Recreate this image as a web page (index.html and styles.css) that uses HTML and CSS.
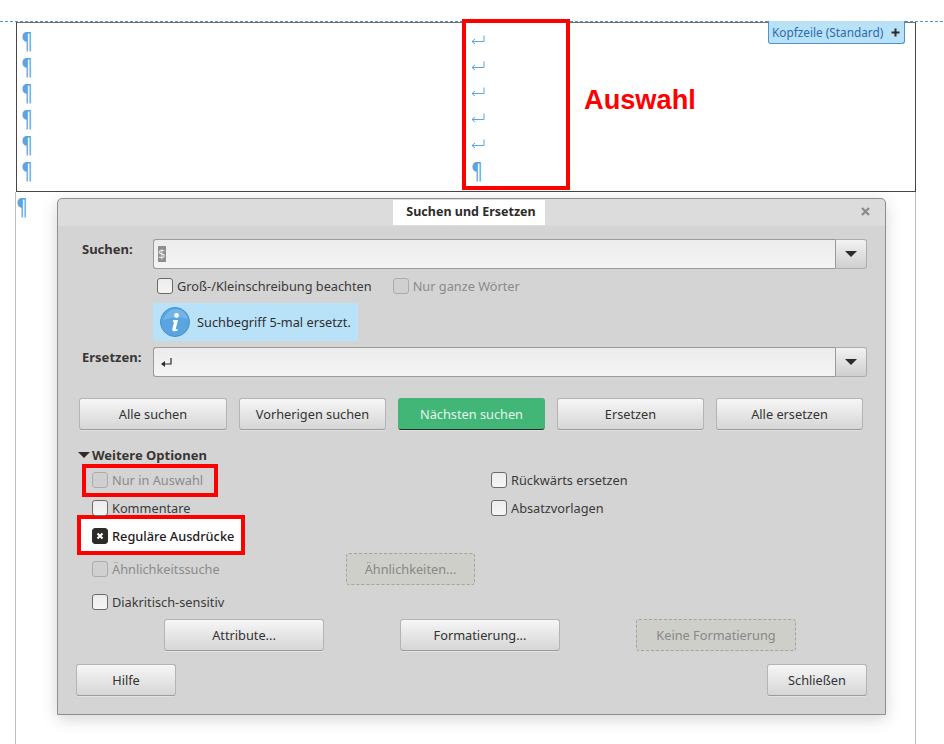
FILE: index.html
```html
<!DOCTYPE html>
<html lang="de">
<head>
<meta charset="utf-8">
<title>Suchen und Ersetzen</title>
<link rel="stylesheet" href="styles.css">
</head>
<body>
<div class="page">
  <div class="header-area">
    <div class="line"><span class="pil">¶</span><svg class="ret" viewBox="0 0 14 10"><path d="M13 0.5V6.5H1M1 6.5L4 4M1 6.5L4 9" fill="none" stroke="#5aa5e0" stroke-width="1"/></svg></div>
    <div class="line"><span class="pil">¶</span><svg class="ret" viewBox="0 0 14 10"><path d="M13 0.5V6.5H1M1 6.5L4 4M1 6.5L4 9" fill="none" stroke="#5aa5e0" stroke-width="1"/></svg></div>
    <div class="line"><span class="pil">¶</span><svg class="ret" viewBox="0 0 14 10"><path d="M13 0.5V6.5H1M1 6.5L4 4M1 6.5L4 9" fill="none" stroke="#5aa5e0" stroke-width="1"/></svg></div>
    <div class="line"><span class="pil">¶</span><svg class="ret" viewBox="0 0 14 10"><path d="M13 0.5V6.5H1M1 6.5L4 4M1 6.5L4 9" fill="none" stroke="#5aa5e0" stroke-width="1"/></svg></div>
    <div class="line"><span class="pil">¶</span><svg class="ret" viewBox="0 0 14 10"><path d="M13 0.5V6.5H1M1 6.5L4 4M1 6.5L4 9" fill="none" stroke="#5aa5e0" stroke-width="1"/></svg></div>
    <div class="line"><span class="pil">¶</span><span class="pil pil-end">¶</span></div>
    <div class="tag"><span>Kopfzeile (Standard)</span><svg class="tag-plus" viewBox="0 0 9 9"><path d="M4.5 0.5V8.5M0.5 4.5H8.5" stroke="#2b2b2b" stroke-width="2"/></svg></div>
  </div>
  <div class="body-area"><span class="pil">¶</span></div>
  <div class="sel-box"></div>
  <div class="sel-label">Auswahl</div>

  <div class="dialog">
    <div class="titlebar">
      <span class="title">Suchen und Ersetzen</span>
      <svg class="close" viewBox="0 0 9 9"><path d="M1 1L8 8M8 1L1 8" stroke="#8a8a8a" stroke-width="2.2"/></svg>
    </div>
    <div class="content">
      <div class="field">
        <label class="field-label">Suchen:</label>
        <div class="combo">
          <div class="entry"><span class="selected">$</span></div>
          <div class="drop"><i class="tri"></i></div>
        </div>
      </div>
      <div class="under-field checks">
        <label class="chk"><i class="box"></i>Groß-/Kleinschreibung beachten</label>
        <label class="chk off"><i class="box"></i>Nur ganze Wörter</label>
      </div>
      <div class="under-field">
        <div class="info">
          <svg class="info-icon" viewBox="0 0 30 30"><circle cx="15" cy="15" r="14.5" fill="#5aa5e0" stroke="#4a8fc8"/><path d="M3 13C6 5 12 2 17 2C23 3 27 7 28 12C20 9 11 10 3 13Z" fill="#74b5e8"/><circle cx="16.5" cy="8.5" r="2.4" fill="#fff"/><path d="M13 13H18L15.8 21.5C15.6 22.5 16.4 22.6 17.8 22L17.5 23.6C15 24.8 11.8 24.8 12.3 22L14 15.2L12.8 14.6Z" fill="#fff"/></svg>
          <span>Suchbegriff 5-mal ersetzt.</span>
        </div>
      </div>
      <div class="field field-second">
        <label class="field-label">Ersetzen:</label>
        <div class="combo">
          <div class="entry"><svg class="entry-ret" viewBox="0 0 11 9"><path d="M10 0V6H3" fill="none" stroke="#2b2b2b" stroke-width="1.2"/><path d="M0 6L4 3V9Z" fill="#2b2b2b"/></svg></div>
          <div class="drop"><i class="tri"></i></div>
        </div>
      </div>
      <div class="actions">
        <button class="btn">Alle suchen</button>
        <button class="btn">Vorherigen suchen</button>
        <button class="btn primary">Nächsten suchen</button>
        <button class="btn">Ersetzen</button>
        <button class="btn">Alle ersetzen</button>
      </div>
      <div class="expander"><i class="tri"></i>Weitere Optionen</div>
      <div class="options">
        <div class="opt-a span2 mark-outline"><label class="chk off"><i class="box"></i>Nur in Auswahl</label></div>
        <div class="opt-c"><label class="chk"><i class="box"></i>Rückwärts ersetzen</label></div>
        <div class="opt-a span2"><label class="chk"><i class="box"></i>Kommentare</label></div>
        <div class="opt-c"><label class="chk"><i class="box"></i>Absatzvorlagen</label></div>
        <div class="opt-a span3 mark-fill"><label class="chk strong"><i class="box checked"><svg viewBox="0 0 8 8"><path d="M1.5 1.5L6.5 6.5M6.5 1.5L1.5 6.5" stroke="#fff" stroke-width="2"/></svg></i>Reguläre Ausdrücke</label></div>
        <div class="opt-a"><label class="chk off"><i class="box"></i>Ähnlichkeitssuche</label></div>
        <div class="opt-b span2"><button class="btn disabled sim">Ähnlichkeiten...</button></div>
        <div class="opt-a span3"><label class="chk"><i class="box"></i>Diakritisch-sensitiv</label></div>
      </div>
      <div class="format-row">
        <button class="btn wide">Attribute...</button>
        <button class="btn wide">Formatierung...</button>
        <button class="btn wide disabled">Keine Formatierung</button>
      </div>
      <div class="footer-row">
        <button class="btn foot">Hilfe</button>
        <button class="btn foot">Schließen</button>
      </div>
    </div>
  </div>
</div>
</body>
</html>
```

FILE: styles.css
```css
*, *::before, *::after { box-sizing: border-box; }
html, body { margin: 0; padding: 0; background: #fff; }
body { font-family: "Noto Sans", "Open Sans", sans-serif; font-size: 12.75px; color: #333; }
i { font-style: normal; display: block; }

.page {
  position: relative;
  width: 944px;
  height: 744px;
  overflow: hidden;
  padding-top: 21px;
  background-image: repeating-linear-gradient(90deg, #4f93cc 0 3px, #fff 3px 5px);
  background-size: 100% 1px;
  background-position: 0 21px;
  background-repeat: no-repeat;
}

.header-area {
  position: relative;
  margin: 1px 0 0 16px;
  width: 900px;
  height: 170px;
  background: #fff;
  border: 1px solid #4a4442;
  border-top-color: #77706e;
  padding-top: 5px;
  padding-left: 4px;
}
.line { display: flex; align-items: center; height: 26px; position: relative; }
.pil {
  font-family: "DejaVu Sans", sans-serif;
  font-size: 23px;
  line-height: 26px;
  color: #5aa5e0;
  width: 11px;
  display: block;
  transform: scaleX(0.8);
  transform-origin: left center;
}
.ret { width: 14px; height: 10px; margin-left: 439px; margin-top: -3px; }
.pil-end { margin-left: 439px; }

.tag {
  position: absolute;
  right: 10px;
  top: -2px;
  width: 137px;
  height: 23px;
  background: #b9e2f9;
  border: 1px solid #4f93cc;
  border-top: 0;
  border-radius: 0 0 3px 3px;
  color: #2a6bad;
  font-size: 11.8px;
  display: flex;
  align-items: center;
  padding: 0 4px 0 3px;
  justify-content: space-between;
}
.tag-plus { width: 9px; height: 9px; }

.body-area {
  margin-left: 15px;
  width: 901px;
  height: 560px;
  border-left: 1px solid #bdbdbd;
  border-right: 1px solid #bdbdbd;
  padding-top: 2px;
}

.sel-box {
  position: absolute;
  left: 462px;
  top: 19px;
  width: 108px;
  height: 171px;
  border: 4px solid #f00;
}
.sel-label {
  position: absolute;
  left: 584px;
  top: 84px;
  font-family: "Liberation Sans", sans-serif;
  font-weight: bold;
  font-size: 27.2px;
  line-height: 32px;
  color: #f00;
}

.dialog {
  position: absolute;
  left: 57px;
  top: 198px;
  width: 829px;
  height: 517px;
  background: #d4d4d4;
  border: 1px solid #8f8f8f;
  border-radius: 5px 5px 0 0;
  box-shadow: 0 4px 16px rgba(0, 0, 0, 0.17);
}
.titlebar {
  position: relative;
  height: 27px;
  display: flex;
  justify-content: center;
  padding: 1px 5px 0 0;
  background: #dcdcdc;
  border-radius: 5px 5px 0 0;
}
.title {
  width: 152px;
  height: 25px;
  background: #fff;
  font-weight: 700;
  font-size: 12.5px;
  color: #2e2a2a;
  text-align: center;
  text-indent: 4px;
  line-height: 24px;
}
.close { position: absolute; right: 15px; top: 8px; width: 9px; height: 9px; }

.content { padding: 13px 18px 0 24px; }

.field { display: flex; }
.field-second { margin-top: 6px; }
.field-label { width: 71px; font-weight: 700; font-size: 13px; color: #3a3535; line-height: 20px; }
.combo { flex: 1; display: flex; height: 30px; }
.entry {
  flex: 1;
  border: 1px solid #9a9a9a;
  border-right: 0;
  border-radius: 3px 0 0 3px;
  background: linear-gradient(#ececec, #f4f4f4);
  padding-left: 4px;
  display: flex;
  align-items: center;
}
.selected { background: #8e8e8e; color: #e6e6e6; line-height: 16px; height: 16px; width: 8px; font-size: 13px; }
.entry-ret { width: 11px; height: 9px; margin-left: 3px; margin-top: 1px; }
.drop {
  width: 32px;
  border: 1px solid #adadad;
  border-left: 1px solid #9a9a9a;
  border-radius: 0 3px 3px 0;
  background: linear-gradient(#f2f2f2, #cfcfcf);
  display: flex;
  align-items: center;
  justify-content: center;
}
.tri { width: 0; height: 0; border-left: 6px solid transparent; border-right: 6px solid transparent; border-top: 6px solid #2e2a2a; }

.under-field { margin-left: 71px; }
.checks { display: flex; gap: 21px; margin-top: 7px; padding-left: 4px; height: 19px; align-items: center; }
.chk { display: flex; align-items: center; gap: 4px; color: #3a3a3a; white-space: nowrap; position: relative; z-index: 1; }
.box {
  width: 16px;
  height: 16px;
  border: 1px solid #6e6a6a;
  border-radius: 3px;
  background: linear-gradient(#ececec, #f5f5f5);
  flex: none;
  display: flex;
  align-items: center;
  justify-content: center;
}
.off { color: #8b8b8b; }
.off .box { border-color: #acacac; background: #d0d0d0; }
.strong { color: #1d1a1a; font-weight: 500; }
.checked { background: #2f2a2a; border-color: #2f2a2a; }
.checked svg { width: 8px; height: 8px; }

.info {
  width: 205px;
  height: 38px;
  margin-top: 8px;
  background: #b9e2f9;
  display: flex;
  align-items: center;
  gap: 7px;
  padding-left: 7px;
  color: #2f2f2f;
}
.info-icon { width: 30px; height: 30px; flex: none; }

.btn {
  font-family: inherit;
  font-size: 12.75px;
  color: #333;
  height: 32px;
  border: 1px solid #b4b4b4;
  border-bottom-color: #9c9c9c;
  border-radius: 3px;
  background: linear-gradient(#f6f6f6, #d6d6d6);
  padding: 0;
  box-shadow: 0 1px 0 rgba(255, 255, 255, 0.3);
}
.primary { background: #41b677; border-color: #41b677; border-bottom: 1px solid #2a2a2a; color: #e6f5ec; }
.disabled { background: #cfcfca; border: 1px dashed #a3a3a0; color: #888; box-shadow: none; }

.actions { display: flex; gap: 12px; margin: 21px 4px 0 -3px; }
.actions .btn { flex: 1; }
.actions .btn:first-child { flex: 0 0 148px; }

.expander {
  display: flex;
  align-items: center;
  gap: 2px;
  margin: 17px 0 0 -4px;
  height: 15px;
  font-size: 13px;
  font-weight: 700;
  color: #3a3535;
}

.options {
  display: grid;
  grid-template-columns: 254px 145px 1fr;
  grid-template-rows: 28px 28px 28px 38px 28px;
  margin: 4px 0 0 10px;
}
.opt-a, .opt-b, .opt-c { display: flex; align-items: center; position: relative; }
.span2 { grid-column: span 2; }
.span3 { grid-column: span 3; }
.sim { width: 129px; }

.mark-outline::after {
  content: "";
  position: absolute;
  left: -10px;
  top: -2px;
  width: 136px;
  height: 33px;
  border: 4px solid #f00;
}
.mark-fill::before {
  content: "";
  position: absolute;
  left: -15px;
  top: -7px;
  width: 168px;
  height: 40px;
  border: 4px solid #f00;
  background: #fff;
}

.format-row { display: flex; gap: 76px; margin: 3px 0 0 82px; }
.wide { width: 160px; }
.footer-row { display: flex; justify-content: space-between; margin: 13px 0 0 -6px; }
.foot { width: 100px; }
```
